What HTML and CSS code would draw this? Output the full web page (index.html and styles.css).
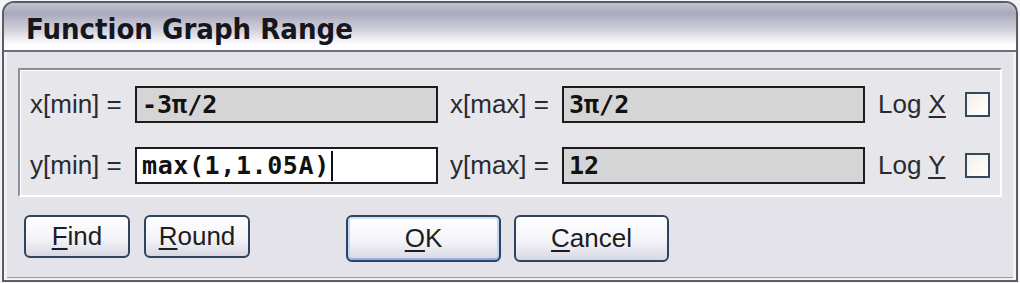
FILE: index.html
```html
<!DOCTYPE html>
<html lang="en">
<head>
    <meta charset="UTF-8">
    <meta name="viewport" content="width=device-width, initial-scale=1.0">
    <title>Function Graph Range</title>
    <link rel="stylesheet" href="styles.css">
</head>
<body>
    <div class="dialog">
        <div class="title-bar">Function Graph Range</div>

        <div class="dialog-body">
            <div class="range-group">
                <label class="field-label" for="xmin">x[min] =</label>
                <div class="field disabled" id="xmin">-3&pi;/2</div>
                <label class="field-label second" for="xmax">x[max] =</label>
                <div class="field disabled" id="xmax">3&pi;/2</div>
                <span class="log-label">Log <u>X</u></span>
                <span class="check"></span>

                <label class="field-label" for="ymin">y[min] =</label>
                <div class="field active" id="ymin">max(1,1.05A)<span class="caret"></span></div>
                <label class="field-label second" for="ymax">y[max] =</label>
                <div class="field disabled" id="ymax">12</div>
                <span class="log-label">Log <u>Y</u></span>
                <span class="check"></span>
            </div>

            <div class="button-row">
                <button class="btn small"><u>F</u>ind</button>
                <button class="btn small"><u>R</u>ound</button>
                <button class="btn large default push"><u>O</u>K</button>
                <button class="btn large"><u>C</u>ancel</button>
            </div>
        </div>
    </div>
</body>
</html>
```

FILE: styles.css
```css
/* Dialog window */
body {
    margin: 0;
    background-color: #f4f4f6;
    font-family: "Liberation Sans", Arial, sans-serif;
}

.dialog {
    width: 1012px;
    height: 277px;
    margin: 1px 0 0 2px;
    border: 2px solid #5c5c68;
    border-radius: 12px 12px 0 0;
    background-color: #e3e3e9;
    box-shadow: inset 0 0 0 2px #f2f2f5, inset 0 0 0 3px #9a9aa6;
    display: flex;
    flex-direction: column;
    overflow: hidden;
}

.title-bar {
    height: 49px;
    flex: none;
    padding-left: 22px;
    padding-top: 5px;
    box-sizing: border-box;
    display: flex;
    align-items: center;
    font-family: "DejaVu Sans Condensed", "DejaVu Sans", sans-serif;
    font-stretch: condensed;
    font-weight: bold;
    font-size: 29px;
    color: #16161e;
    background: linear-gradient(to bottom, #c2c2d2 0%, #a9a9bd 22%, #d2d2dc 58%, #fbfbfd 86%, #ffffff 100%);
    border-bottom: 2px solid #6e6e7c;
}

.dialog-body {
    flex: 1;
    padding: 16px 14px 0 14px;
    box-shadow: inset 3px 0 0 #f2f2f5, inset -3px 0 0 #f2f2f5;
}

/* Range fields */
.range-group {
    display: grid;
    grid-template-columns: 105px 303px 124px 303px 100px 25px;
    grid-template-rows: 37px 37px;
    row-gap: 24px;
    align-items: center;
    padding: 16px 0 11px 10px;
    background-color: #e6e6eb;
    border: 2px solid;
    border-color: #8e8e98 #ffffff #ffffff #8e8e98;
    box-shadow: inset 1px 1px 0 #ffffff;
}

.field-label {
    font-size: 26px;
    color: #2a2a30;
}

.field-label.second {
    padding-left: 12px;
}

.field {
    height: 37px;
    box-sizing: border-box;
    border: 2px solid #1c1c1c;
    padding: 0 5px;
    display: flex;
    align-items: center;
    font-family: "DejaVu Sans Mono", "Liberation Mono", monospace;
    font-weight: bold;
    font-size: 25px;
    color: #111;
}

.field.disabled {
    background-color: #d5d5d5;
}

.field.active {
    background-color: #ffffff;
    letter-spacing: 0.6px;
}

.caret {
    display: inline-block;
    width: 2px;
    height: 30px;
    margin-left: 1px;
    background-color: #111;
}

.log-label {
    padding-left: 13px;
    font-size: 26px;
    color: #2a2a30;
}

.check {
    width: 25px;
    height: 25px;
    box-sizing: border-box;
    border: 2px solid #34495e;
    background: linear-gradient(135deg, #f3f0e6, #ffffff);
}

/* Buttons */
.button-row {
    display: flex;
    align-items: flex-start;
    gap: 14px;
    padding: 18px 0 0 6px;
}

.btn {
    box-sizing: border-box;
    border: 2px solid #2d4360;
    border-radius: 6px;
    background: linear-gradient(to bottom, #ffffff 0%, #f4f4f8 55%, #d8d8e4 100%);
    font-family: "Liberation Sans", Arial, sans-serif;
    font-size: 26px;
    color: #1c1c22;
    padding: 0;
}

.btn.small {
    width: 106px;
    height: 43px;
}

.btn.large {
    width: 155px;
    height: 47px;
}

.btn.default {
    box-shadow: inset 0 -2px 0 #8eb2e4, inset 0 2px 0 #d4e2f6, inset 2px 0 0 #c4d6f2, inset -2px 0 0 #c4d6f2;
}

.btn.push {
    margin-left: 82px;
}

.btn.push + .btn {
    margin-left: -1px;
}

u {
    text-underline-offset: 3px;
}
```
